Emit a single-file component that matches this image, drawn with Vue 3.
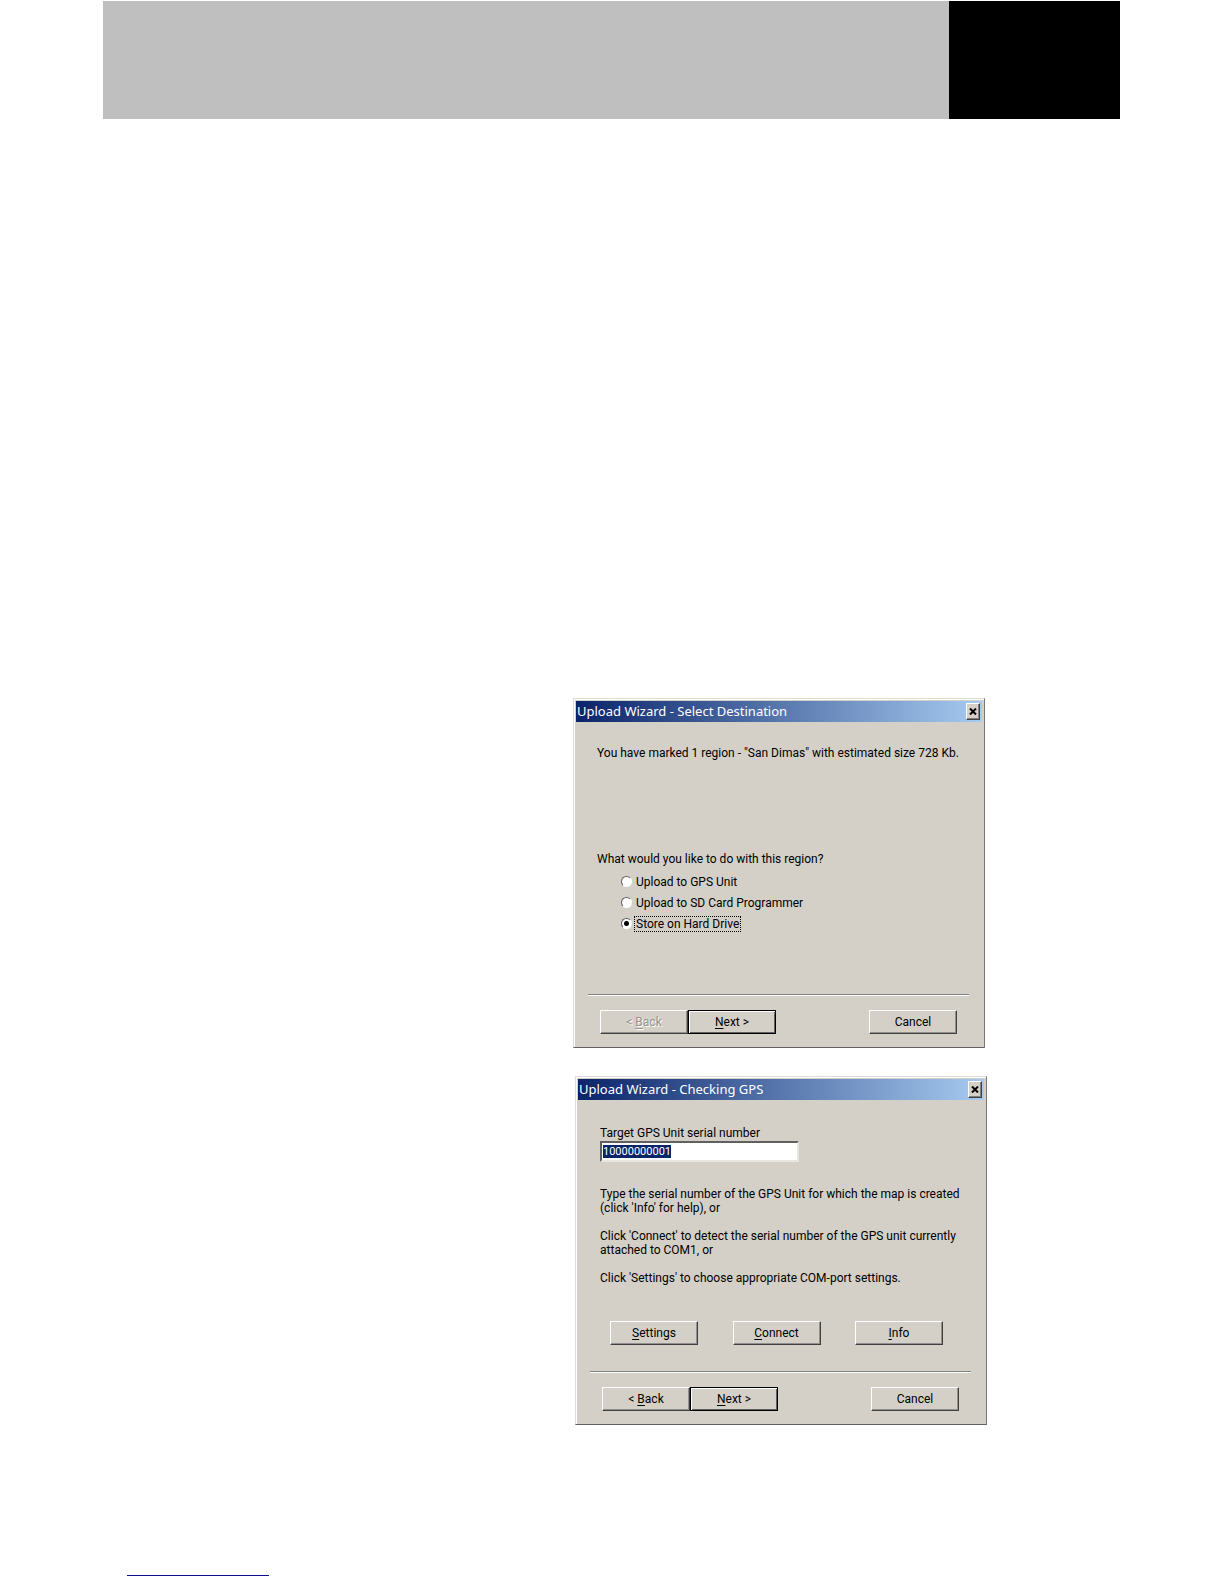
<script setup>
import { onMounted, ref } from 'vue'

const destinations = [
  { id: 'gps', label: 'Upload to GPS Unit' },
  { id: 'sd', label: 'Upload to SD Card Programmer' },
  { id: 'disk', label: 'Store on Hard Drive' }
]
const destination = ref('disk')
const serial = ref('10000000001')
const serialBox = ref(null)

onMounted(() => {
  serialBox.value.focus({ preventScroll: true })
  serialBox.value.select()
})
</script>

<template>
  <div class="page">
    <header class="banner"><div class="banner-tab"></div></header>

    <main class="figures">
      <section class="dialog" aria-labelledby="title-destination">
        <div class="titlebar">
          <h2 id="title-destination">Upload Wizard - Select Destination</h2>
          <button class="close" type="button" aria-label="Close">
            <svg width="8" height="7" viewBox="0 0 8 7"><path d="M1 0.5L7 6.5M7 0.5L1 6.5" stroke="#000" stroke-width="2" /></svg>
          </button>
        </div>
        <div class="body destination">
          <p>You have marked 1 region - "San Dimas" with estimated size 728 Kb.</p>
          <fieldset>
            <legend>What would you like to do with this region?</legend>
            <label v-for="d in destinations" :key="d.id" class="option">
              <input v-model="destination" type="radio" name="destination" :value="d.id" />
              <span :class="{ focused: d.id === destination }">{{ d.label }}</span>
            </label>
          </fieldset>
        </div>
        <div class="actions">
          <button class="btn" type="button" disabled>&lt; <u>B</u>ack</button>
          <button class="btn default" type="button"><u>N</u>ext &gt;</button>
          <button class="btn cancel" type="button">Cancel</button>
        </div>
      </section>

      <section class="dialog shifted" aria-labelledby="title-gps">
        <div class="titlebar">
          <h2 id="title-gps">Upload Wizard - Checking GPS</h2>
          <button class="close" type="button" aria-label="Close">
            <svg width="8" height="7" viewBox="0 0 8 7"><path d="M1 0.5L7 6.5M7 0.5L1 6.5" stroke="#000" stroke-width="2" /></svg>
          </button>
        </div>
        <div class="body checking">
          <label for="serial">Target GPS Unit serial number</label>
          <input id="serial" ref="serialBox" v-model="serial" class="serial" type="text" />
          <p>Type the serial number of the GPS Unit for which the map is created<br />(click 'Info' for help), or</p>
          <p>Click 'Connect' to detect the serial number of the GPS unit currently<br />attached to COM1, or</p>
          <p>Click 'Settings' to choose appropriate COM-port settings.</p>
          <div class="tools">
            <button class="btn" type="button"><u>S</u>ettings</button>
            <button class="btn" type="button"><u>C</u>onnect</button>
            <button class="btn" type="button"><u>I</u>nfo</button>
          </div>
        </div>
        <div class="actions">
          <button class="btn" type="button">&lt; <u>B</u>ack</button>
          <button class="btn default" type="button"><u>N</u>ext &gt;</button>
          <button class="btn cancel" type="button">Cancel</button>
        </div>
      </section>
    </main>

    <footer><hr class="footnote" /></footer>
  </div>
</template>

<style>
body { margin: 0; background: #fff; }
</style>

<style scoped>
.page {
  padding: 1px 104px 0 103px;
  font: 12px/14px Roboto, "Liberation Sans", sans-serif;
  color: #000;
}
.banner {
  display: flex;
  justify-content: flex-end;
  height: 118px;
  background: #bfbfbf;
}
.banner-tab { width: 171px; background: #000; }
.figures {
  display: flex;
  flex-direction: column;
  align-items: flex-end;
  gap: 28px;
  padding: 579px 133px 0 0;
}
.dialog {
  box-sizing: border-box;
  width: 412px;
  margin-right: 2px;
  padding: 1px;
  background: #d4d0c8;
  border: 1px solid;
  border-color: #dfdcd7 #777 #606060 #dfdcd7;
  box-shadow: inset 1px 1px #fff;
}
.dialog.shifted { margin-right: 0; }
.titlebar {
  display: flex;
  align-items: center;
  justify-content: space-between;
  height: 21px;
  margin: 1px;
  padding: 0 2px 0 1px;
  background: linear-gradient(90deg, #0a246a, #a6caf0);
}
h2 {
  margin: 0;
  padding-bottom: 2px;
  font: 400 13px/18px "Noto Sans", "Open Sans", sans-serif;
  color: #fff;
}
.close {
  display: flex;
  align-items: center;
  justify-content: center;
  box-sizing: border-box;
  width: 14px;
  height: 17px;
  padding: 0;
  background: #d4d0c8;
  border: 1px solid;
  border-color: #fff #404040 #404040 #fff;
  box-shadow: inset -1px -1px #808080;
}
p { margin: 0; }
.body { box-sizing: border-box; padding: 0 22px; }
.destination { height: 271px; padding-top: 23px; }
fieldset { margin: 92px 0 0; padding: 0; border: 0; }
legend { padding: 0; margin-bottom: 5px; }
.option {
  display: flex;
  align-items: center;
  gap: 2px;
  height: 21px;
  padding-left: 24px;
}
.option input {
  appearance: none;
  box-sizing: border-box;
  width: 11px;
  height: 11px;
  margin: 0;
  border: 1px solid;
  border-color: #606060 #fff #fff #606060;
  border-radius: 50%;
  background: #fff;
}
.option input:checked { background: radial-gradient(circle, #000 2px, #fff 3px); }
.option span { padding: 0 1px; border: 1px solid transparent; }
.option .focused { border: 1px dotted #000; }
.checking { height: 270px; padding: 25px 22px 0 23px; }
.checking label { display: block; }
.serial {
  display: block;
  box-sizing: border-box;
  width: 199px;
  height: 21px;
  margin: 1px 0 25px;
  padding: 0 1px;
  font: 11px/13px Roboto, "Liberation Sans", sans-serif;
  color: #000;
  background: #fff;
  border: 2px solid;
  border-color: #606060 #e8e6e0 #e8e6e0 #606060;
  outline: 0;
}
.serial::selection { color: #fff; background: #0a246a; }
.checking p { margin-bottom: 14px; }
.tools {
  display: flex;
  justify-content: space-between;
  padding: 22px 20px 0 10px;
}
.actions {
  display: flex;
  margin: 0 14px 0 13px;
  padding: 15px 12px 12px;
  border-top: 1px solid #808080;
  box-shadow: inset 0 1px #fff;
}
.btn {
  box-sizing: border-box;
  width: 88px;
  height: 24px;
  padding: 0;
  font: 12px/14px Roboto, "Liberation Sans", sans-serif;
  color: #000;
  background: #d4d0c8;
  border: 1px solid;
  border-color: #fff #404040 #404040 #fff;
  box-shadow: inset -1px -1px #909090;
}
.btn:disabled { color: #969390; text-shadow: 1px 1px #fff; }
.btn.default { border-color: #000; box-shadow: inset 1px 1px #fff, inset -1px -1px #606060; }
.btn.cancel { margin-left: auto; }
u { text-underline-offset: 2px; }
.footnote {
  width: 142px;
  height: 1px;
  margin: 150px 0 0 24px;
  border: 0;
  background: #10108c;
}
</style>
